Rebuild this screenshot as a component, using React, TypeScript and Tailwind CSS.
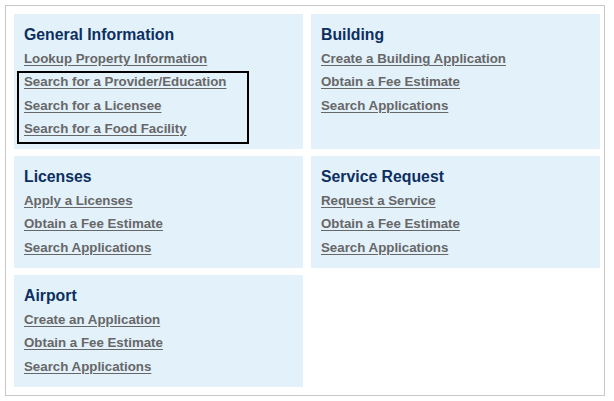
import React from "react";

type Section = { title: string; links: string[] };

const rows: Section[][] = [
  [
    {
      title: "General Information",
      links: [
        "Lookup Property Information",
        "Search for a Provider/Education",
        "Search for a Licensee",
        "Search for a Food Facility",
      ],
    },
    {
      title: "Building",
      links: ["Create a Building Application", "Obtain a Fee Estimate", "Search Applications"],
    },
  ],
  [
    {
      title: "Licenses",
      links: ["Apply a Licenses", "Obtain a Fee Estimate", "Search Applications"],
    },
    {
      title: "Service Request",
      links: ["Request a Service", "Obtain a Fee Estimate", "Search Applications"],
    },
  ],
  [
    {
      title: "Airport",
      links: ["Create an Application", "Obtain a Fee Estimate", "Search Applications"],
    },
  ],
];

function Panel({ s, highlight }: { s: Section; highlight?: boolean }) {
  return (
    <div className="relative bg-[#e3f1fb] pl-[10px] pr-2 pt-2 pb-[9px]">
      <h2 className="text-[15.8px] font-bold leading-[25px] text-[#0c2f5f]">{s.title}</h2>
      <ul>
        {s.links.map((l) => (
          <li key={l} className="text-[13.3px] font-bold leading-[23.3px]">
            <a href="#" className="text-[#676767] underline underline-offset-[2px]">
              {l}
            </a>
          </li>
        ))}
      </ul>
      {highlight && (
        <div className="pointer-events-none absolute left-[3px] top-[57px] h-[73px] w-[232px] border-2 border-black" />
      )}
    </div>
  );
}

export default function App() {
  return (
    <div
      className="min-h-[401px] w-[614px] bg-white pl-[5px] pt-[5px]"
      style={{ fontFamily: '"Liberation Sans", Arial, sans-serif' }}
    >
      <div className="w-[600px] border border-[#c8c8c8] pb-[8px] pl-2 pr-[4px] pt-2">
        <div className="grid grid-cols-[289px_289px] gap-x-2 gap-y-[7px]">
          {rows.map((r, ri) =>
            r.map((s, si) => <Panel key={`${ri}-${si}`} s={s} highlight={ri === 0 && si === 0} />)
          )}
        </div>
      </div>
    </div>
  );
}
